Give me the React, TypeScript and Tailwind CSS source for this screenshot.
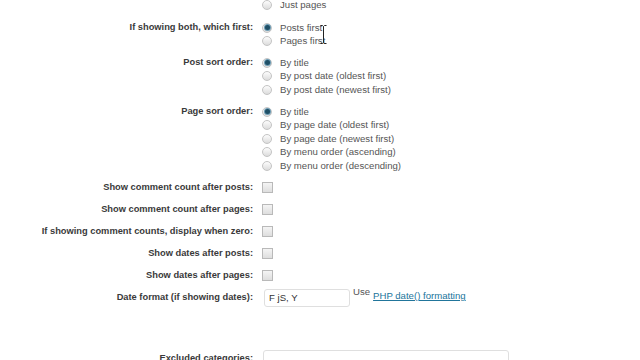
import React from 'react'

const font = { fontFamily: '"Liberation Sans", Arial, sans-serif' }

function Radio({ checked }: { checked?: boolean }) {
  return (
    <span className="flex items-center justify-center w-[10px] h-[10px] rounded-full border border-[#c4c4c4] bg-gradient-to-b from-[#fdfdfd] to-[#dcdcdc] shrink-0">
      {checked && <span className="w-[5px] h-[5px] rounded-full bg-[#1f4f66] ring-1 ring-[#6c9bb3]" />}
    </span>
  )
}

function Check() {
  return (
    <span className="block w-[11px] h-[11px] border border-[#b9b9b9] bg-gradient-to-b from-[#f4f4f4] to-[#dedede] shrink-0" />
  )
}

function RadioGroup({ label, options, checkedIdx, className = '' }: { label?: string; options: string[]; checkedIdx?: number; className?: string }) {
  return (
    <div className={`flex ${className}`}>
      <div className="w-[255px] shrink-0 text-right pr-[2px] font-bold text-[#3a3a3a] leading-[13.5px] text-[9.3px]">
        {label}
      </div>
      <div className="pl-[7px] flex flex-col">
        {options.map((o, i) => (
          <div key={o} className="flex items-center h-[13.5px] gap-[8px] text-[9.6px] text-[#555]">
            <Radio checked={i === checkedIdx} />
            <span>{o}</span>
          </div>
        ))}
      </div>
    </div>
  )
}

function CheckRow({ label }: { label: string }) {
  return (
    <div className="flex items-center h-[22px]">
      <div className="w-[255px] shrink-0 text-right pr-[2px] font-bold text-[#3a3a3a] text-[9.3px]">{label}</div>
      <div className="pl-[7px]"><Check /></div>
    </div>
  )
}

export default function App() {
  return (
    <div className="relative w-[640px] h-[360px] overflow-hidden bg-white" style={font}>
      <div className="flex flex-col -mt-[1.5px]">
        <RadioGroup options={['Just pages']} />
        <RadioGroup className="mt-[9px]" label="If showing both, which first:" options={['Posts first', 'Pages first']} checkedIdx={0} />
        <RadioGroup className="mt-[8px]" label="Post sort order:" options={['By title', 'By post date (oldest first)', 'By post date (newest first)']} checkedIdx={0} />
        <RadioGroup className="mt-[8.5px]" label="Page sort order:" options={['By title', 'By page date (oldest first)', 'By page date (newest first)', 'By menu order (ascending)', 'By menu order (descending)']} checkedIdx={0} />
        <div className="mt-[4px] flex flex-col">
          <CheckRow label="Show comment count after posts:" />
          <CheckRow label="Show comment count after pages:" />
          <CheckRow label="If showing comment counts, display when zero:" />
          <CheckRow label="Show dates after posts:" />
          <CheckRow label="Show dates after pages:" />
        </div>
        <div className="flex items-center h-[23px]">
          <div className="w-[255px] shrink-0 text-right pr-[2px] font-bold text-[#3a3a3a] text-[9.3px]">Date format (if showing dates):</div>
          <div className="pl-[9px] flex items-start">
            <div className="w-[86px] h-[18px] border border-[#dfdfdf] rounded-[3px] px-[4px] text-[9.6px] text-[#333] leading-[16px]">F jS, Y</div>
            <span className="ml-[3px] -mt-[4px] text-[9.6px] text-[#555]">Use</span>
            <a className="ml-[3px] text-[9.6px] text-[#21759b] underline">PHP date() formatting</a>
          </div>
        </div>
        <div className="flex items-start mt-[40px]">
          <div className="w-[255px] shrink-0 text-right pr-[2px] font-bold text-[#3a3a3a] text-[9.3px] pt-[2px]">Excluded categories:</div>
          <div className="pl-[8px]">
            <div className="w-[246px] h-[20px] border border-[#dfdfdf] rounded-[3px]" />
          </div>
        </div>
      </div>
      <svg className="absolute left-[320px] top-[25px]" width="7" height="19" viewBox="0 0 7 19">
        <path d="M0.5 0.5h2l1 1 1-1h2M3.5 1.5v16M0.5 18.5h2l1-1 1 1h2" stroke="#222" strokeWidth="1" fill="none" />
      </svg>
    </div>
  )
}
